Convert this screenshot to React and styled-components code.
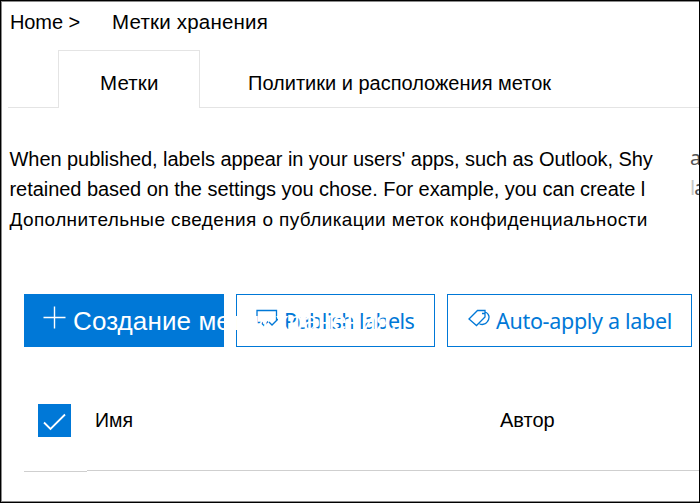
import React from "react";
import styled, { createGlobalStyle } from "styled-components";

const Global = createGlobalStyle`
  * { box-sizing: border-box; }
  body { margin: 0; background: #fff; overflow: hidden; }
`;

const Page = styled.main`
  width: 700px;
  height: 503px;
  display: flex;
  flex-direction: column;
  border: 1px solid #000;
  box-shadow: inset 1px 1px 0 #8a8a8a, inset 0 -1px 0 #8a8a8a;
  overflow: hidden;
  color: #000;
  font: 20px/30px "Liberation Sans", Arial, sans-serif;
`;

const Text = styled.span`
  display: block;
  flex: none;
  white-space: pre;
  font-size: ${(p) => p.$size || 20}px;
  letter-spacing: ${(p) => p.$track || 0}px;
`;

const Breadcrumb = styled.nav`
  display: flex;
  height: 49px;
  padding: 6px 0 0 9px;
  gap: 32px;
`;

const Tabs = styled.div`
  display: flex;
  height: 58px;
  padding-left: 7px;
`;

const TabEdge = styled.div`
  width: 50px;
  border-bottom: 1px solid #e4e4e4;
`;

const Tab = styled.div`
  padding: 18px 0 0 ${(p) => (p.$active ? 41 : 48)}px;
  ${(p) =>
    p.$active
      ? "width: 142px; border: 1px solid #e4e4e4; border-bottom: 0; padding-top: 17px;"
      : "flex: 1; border-bottom: 1px solid #e4e4e4;"}
`;

const Description = styled.section`
  display: flex;
  justify-content: space-between;
  height: 186px;
  padding: 36px 0 0 8.5px;
`;

const LearnMore = styled(Text)`
  padding-top: 1px;
`;

const Clipped = styled.div`
  width: 9px;
  margin-top: -1px;
  overflow: hidden;
  color: #555;
  font-family: "Noto Sans", sans-serif;
`;

const Faint = styled.span`
  color: #c8c8c8;
`;

const Toolbar = styled.div`
  display: flex;
  gap: 12px;
  height: 53px;
  padding-left: 23px;
`;

const Button = styled.button`
  position: relative;
  display: flex;
  align-items: center;
  flex: none;
  width: ${(p) => p.$width}px;
  height: 53px;
  padding: 0 0 0 ${(p) => p.$inset || 19}px;
  gap: ${(p) => p.$gap || 6}px;
  border: 1px solid #0078d7;
  outline: 0;
  background: ${(p) => (p.$primary ? "#0078d7" : "#fff")};
  color: ${(p) => (p.$primary ? "#fff" : "#0078d7")};
  font: 22px/30px "Noto Sans", sans-serif;
  z-index: ${(p) => (p.$primary ? 1 : 0)};
  svg { flex: none; margin-top: -6px; }
`;

const CreateLabel = styled(Text)`
  padding-top: 1px;
  font-family: "Liberation Sans", Arial, sans-serif;
`;

const HeaderRow = styled.div`
  display: flex;
  align-items: flex-start;
  height: 123px;
  margin-left: 23px;
  padding: 57px 0 0 14px;
`;

const Divider = styled.div`
  display: flex;
  align-items: flex-start;
  height: 2px;
  margin-left: 23px;
`;

const DividerPart = styled.div`
  height: 1px;
  background: #cfcfcf;
  ${(p) => (p.$lead ? "width: 63px; margin-top: 1px;" : "flex: 1;")}
`;

const Checkbox = styled.div`
  display: flex;
  width: 33px;
  height: 33px;
  margin-right: 24px;
  background: #0078d7;
`;

const NameColumn = styled.div`
  width: 405px;
  padding-top: 1px;
`;

const AuthorColumn = styled.div`
  padding-top: 1px;
`;

export default function App() {
  return (
    <>
      <Global />
      <Page>
        <Breadcrumb>
          <Text $track={-0.1}>Home &gt;</Text>
          <Text $size={20.5} $track={0.2}>Метки хранения</Text>
        </Breadcrumb>
        <Tabs>
          <TabEdge />
          <Tab $active><Text $size={20.5} $track={0.15}>Метки</Text></Tab>
          <Tab><Text>Политики и расположения меток</Text></Tab>
        </Tabs>
        <Description>
          <div>
            <Text $track={-0.06}>When published, labels appear in your users' apps, such as Outlook, Shy</Text>
            <Text $track={-0.05}>retained based on the settings you chose. For example, you can create l</Text>
            <LearnMore $size={19} $track={0.39}>Дополнительные сведения о публикации меток конфиденциальности</LearnMore>
          </div>
          <Clipped>
            <Text>a</Text>
            <Text $track={-1}><Faint>l</Faint>a</Text>
          </Clipped>
        </Description>
        <Toolbar>
          <Button $primary $width={200} $inset={18} $gap={7}>
            <svg width="23" height="23" viewBox="0 0 23 23" fill="none" stroke="currentColor" strokeWidth="1.4">
              <path d="M11.5 0.5v22M0.5 11.5h22" />
            </svg>
            <CreateLabel $size={26} $track={0.1}>Создание метки хранения.</CreateLabel>
          </Button>
          <Button $width={199}>
            <svg width="22" height="18" viewBox="0 0 22 18" fill="none" stroke="currentColor" strokeWidth="1.3">
              <path d="M7 13.5H1v-12h19.5v10M5 13.5l3 3 4-4M13 13l3 3 6-6" />
            </svg>
            <Text $size={21.5} $track={-0.6}>Publish labels</Text>
          </Button>
          <Button $width={245} $inset={20}>
            <svg width="22" height="18" viewBox="0 0 22 18" fill="none" stroke="currentColor" strokeWidth="1.3">
              <path d="M1 10L9.5 1.5H17v6.5L8.5 16.5zM14 4.5h3M17 3C21.5 4.5 22 9 19.5 12.5c-2 3-5 3.5-8 2.5" />
            </svg>
            <Text $size={21.5} $track={-0.3}>Auto-apply a label</Text>
          </Button>
        </Toolbar>
        <HeaderRow>
          <Checkbox>
            <svg width="33" height="33" viewBox="0 0 33 33" fill="none" stroke="#fff" strokeWidth="1.8">
              <path d="M6 18.5l6.5 6.5L27 10.5" />
            </svg>
          </Checkbox>
          <NameColumn><Text $size={19.5}>Имя</Text></NameColumn>
          <AuthorColumn><Text>Автор</Text></AuthorColumn>
        </HeaderRow>
        <Divider>
          <DividerPart $lead />
          <DividerPart />
        </Divider>
      </Page>
    </>
  );
}
